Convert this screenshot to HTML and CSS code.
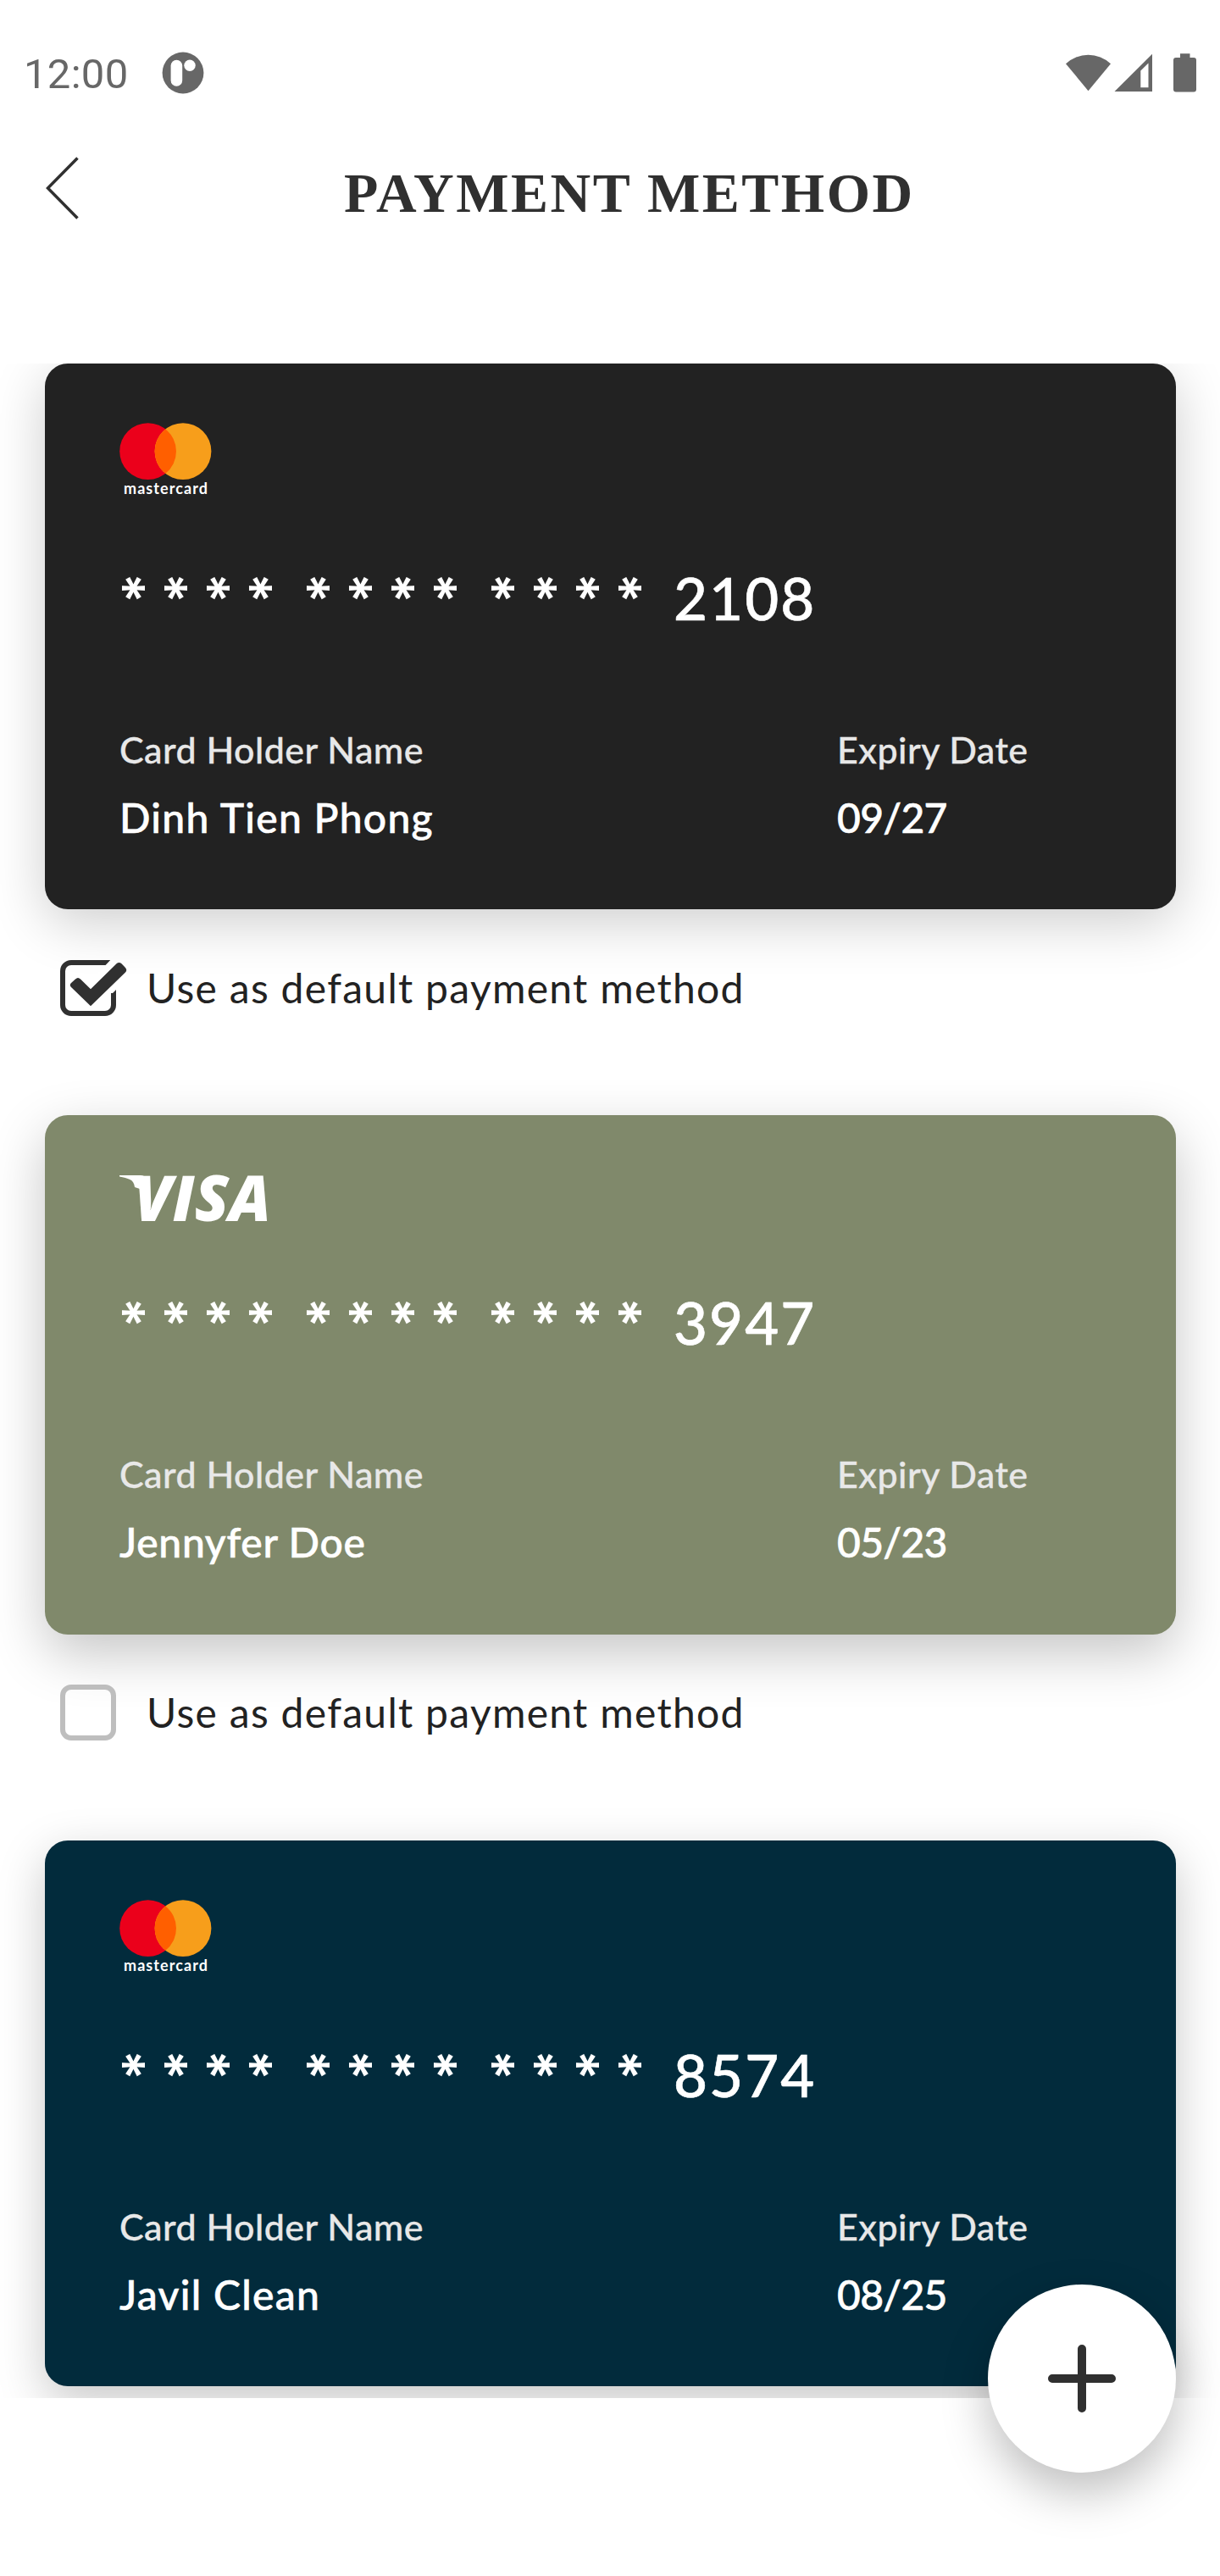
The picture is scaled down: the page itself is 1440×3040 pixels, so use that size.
FILE: index.html
```html
<!DOCTYPE html>
<html lang="en">
<head>
<meta charset="utf-8">
<title>Payment method</title>
<link rel="stylesheet" href="styles.css">
</head>
<body>
<div class="screen">
  <header class="status">
    <div class="status-left">
      <span class="time">12:00</span>
      <svg width="50" height="50" viewBox="0 0 50 50"><circle cx="25" cy="25" r="24.4" fill="#676767"/><rect x="10.6" y="9.7" width="13.6" height="31" rx="6.8" fill="#fff"/><circle cx="33" cy="16.2" r="6.7" fill="#fff"/></svg>
    </div>
    <svg width="156" height="46" viewBox="0 0 156 46" fill="#676767">
      <path d="M0 12.2A39 39 0 0 1 53 12.2L26.5 44.2z"/>
      <path fill-rule="evenodd" d="M102 .8V45H57.5zM97.5 11.5L88.3 20.5V40.2H97.5z"/>
      <path d="M135 .3h11.5V5H151a3 3 0 0 1 3 3V42.600a3 3 0 0 1-3 3H130a3 3 0 0 1-3-3V8a3 3 0 0 1 3-3h5z"/>
    </svg>
  </header>
  <nav class="topbar">
    <svg class="back" width="40" height="76" viewBox="0 0 40 76"><path d="M37.500 2.500L2.500 38L37.500 73.500" fill="none" stroke="#303030" stroke-width="3.500"/></svg>
    <h1>PAYMENT METHOD</h1>
  </nav>
  <main class="list">
    <section class="card black">
      <svg class="brand" width="110" height="86" viewBox="0 0 110 86"><circle cx="33.6" cy="33.6" r="33.4" fill="#eb001b"/><circle cx="75" cy="33.6" r="33.4" fill="#f79e1b"/><path d="M54.300 7.400a33.400 33.400 0 0 1 0 52.400a33.400 33.400 0 0 1 0-52.400z" fill="#ff5f00"/><text x="5" y="84" textLength="99" class="brand-word">mastercard</text></svg>
      <div class="number"><span class="stars"><i>*</i><i>*</i><i>*</i><i>*</i></span><span class="stars"><i>*</i><i>*</i><i>*</i><i>*</i></span><span class="stars"><i>*</i><i>*</i><i>*</i><i>*</i></span><b>2108</b></div>
      <div class="details">
        <div><p class="label">Card Holder Name</p><p class="value">Dinh Tien Phong</p></div>
        <div><p class="label">Expiry Date</p><p class="value date">09/27</p></div>
      </div>
    </section>
    <label class="default">
      <svg width="80" height="68" viewBox="0 0 80 68"><path d="M57 3H13A10 10 0 0 0 3 13V53A10 10 0 0 0 13 63H53A10 10 0 0 0 63 53V39" fill="none" stroke="#303030" stroke-width="6"/><path d="M57 0V6H54L60 0zM60 41L66 35V42H60z" fill="#303030"/><path d="M19 23L36 41L69 6.500" fill="none" stroke="#fff" stroke-width="23"/><path d="M18 22.500q3-3 6 0L36 34.300L66.500 4.300q3-2.500 6 0L77 9q2.500 2.800 0 5.500L36 54.300L13 32q-2.500-2.500 0-5z" fill="#303030"/></svg>
      <span>Use as default payment method</span>
    </label>
    <section class="card olive">
      <svg class="brand" width="178" height="54" viewBox="0 0 178 54"><text x="17" y="55" textLength="162" lengthAdjust="spacingAndGlyphs" class="visa-word">VISA</text><path d="M0 1H25C30 1 31 4 31 8L33 20L18 15C17 5 10 5 0 2.500z" fill="#fff"/></svg>
      <div class="number"><span class="stars"><i>*</i><i>*</i><i>*</i><i>*</i></span><span class="stars"><i>*</i><i>*</i><i>*</i><i>*</i></span><span class="stars"><i>*</i><i>*</i><i>*</i><i>*</i></span><b>3947</b></div>
      <div class="details">
        <div><p class="label">Card Holder Name</p><p class="value snug">Jennyfer Doe</p></div>
        <div><p class="label">Expiry Date</p><p class="value date">05/23</p></div>
      </div>
    </section>
    <label class="default second">
      <svg width="80" height="68" viewBox="0 0 80 68"><rect x="3" y="3" width="60" height="60" rx="10" fill="none" stroke="#bebebe" stroke-width="6"/></svg>
      <span>Use as default payment method</span>
    </label>
    <section class="card navy">
      <svg class="brand" width="110" height="86" viewBox="0 0 110 86"><circle cx="33.6" cy="33.6" r="33.4" fill="#eb001b"/><circle cx="75" cy="33.6" r="33.4" fill="#f79e1b"/><path d="M54.300 7.400a33.400 33.400 0 0 1 0 52.400a33.400 33.400 0 0 1 0-52.400z" fill="#ff5f00"/><text x="5" y="84" textLength="99" class="brand-word">mastercard</text></svg>
      <div class="number"><span class="stars"><i>*</i><i>*</i><i>*</i><i>*</i></span><span class="stars"><i>*</i><i>*</i><i>*</i><i>*</i></span><span class="stars"><i>*</i><i>*</i><i>*</i><i>*</i></span><b>8574</b></div>
      <div class="details">
        <div><p class="label">Card Holder Name</p><p class="value">Javil Clean</p></div>
        <div><p class="label">Expiry Date</p><p class="value date">08/25</p></div>
      </div>
    </section>
  </main>
  <button class="fab" aria-label="Add"><svg width="80" height="80" viewBox="0 0 80 80"><path d="M40 5V75M5 40H75" stroke="#303030" stroke-width="10" stroke-linecap="round"/></svg></button>
</div>
</body>
</html>
```
FILE: styles.css
```css
* { box-sizing: border-box; }
body { margin: 0; background: #fff; font-family: Lato, "Open Sans", sans-serif; color: #222; }
p, h1 { margin: 0; }
.screen { position: relative; width: 1440px; height: 3040px; overflow: hidden; display: flex; flex-direction: column; }

.status { height: 160px; padding: 61px 26px 0 28px; display: flex; justify-content: space-between; align-items: flex-start; }
.status > svg { margin-top: 2px; }
.status-left { display: flex; justify-content: space-between; width: 213px; align-items: center; height: 50px; }
.time { font: 400 49px/50px Roboto, sans-serif; letter-spacing: .3px; color: #676767; padding-top: 3px; }

.topbar { height: 269px; padding: 24px 54px 0; display: flex; align-items: flex-start; }
.back { flex: none; }
h1 { margin: 6px 0 0 312px; font: 700 66px/76px "Liberation Serif", serif; letter-spacing: 2.5px; color: #303030; white-space: nowrap; }

.list { height: 2401px; flex: none; overflow: hidden; padding: 0 52px 0 53px; display: flex; flex-direction: column; }
.card { flex: none; height: 644px; border-radius: 27px; padding: 70px 80px 0 88px; box-shadow: 0 15px 64px rgba(0,0,0,.2); color: #fff; display: flex; flex-direction: column; }
.black { background: #222; }
.olive { background: #80896b; height: 613px; box-shadow: 0 22px 64px rgba(0,0,0,.23); }
.navy { background: #022b3c; box-shadow: 0 18px 56px rgba(0,0,0,.22); }
.brand { flex: none; display: block; overflow: visible; }
.brand-word { font: 700 18px Lato, sans-serif; fill: #fff; }
.visa-word { font: italic 800 74px "Open Sans", sans-serif; fill: #fff; }

.number { margin-top: 81px; height: 80px; display: flex; align-items: center; gap: 18px; }
.stars { display: flex; }
.stars i { display: flex; justify-content: center; width: 32px; margin-right: 18px; height: 80px; font: 600 66px/80px Inter, sans-serif; transform-origin: 50% 30px; transform: translateY(-2px) rotate(90deg); }
.number b { font: 500 69px/80px Lato, sans-serif; letter-spacing: 2.100px; -webkit-text-stroke: .6px #fff; }

.details { margin-top: 109px; display: grid; grid-template-columns: 847px 1fr; }
.label { font-size: 43px; line-height: 60px; color: #e8e8e8; font-weight: 500; letter-spacing: .45px; -webkit-text-stroke: .3px #e8e8e8; }
.value { margin-top: 20px; font-size: 48px; line-height: 60px; font-weight: 500; letter-spacing: 1.300px; -webkit-text-stroke: .6px #fff; }
.snug { letter-spacing: .700px; }
.date { letter-spacing: -.700px; }

.default { height: 243px; flex: none; padding: 60px 0 0 18px; display: flex; align-items: flex-start; gap: 22px; }
.default span { font-size: 48px; line-height: 66px; letter-spacing: 1.300px; }
.second { padding-top: 59px; }

.fab { position: absolute; left: 1166px; top: 2696px; width: 222px; height: 222px; border: 0; border-radius: 50%; background: #fff; display: flex; align-items: center; justify-content: center; padding: 0; box-shadow: 0 24px 54px rgba(0,0,0,.25); }
```
